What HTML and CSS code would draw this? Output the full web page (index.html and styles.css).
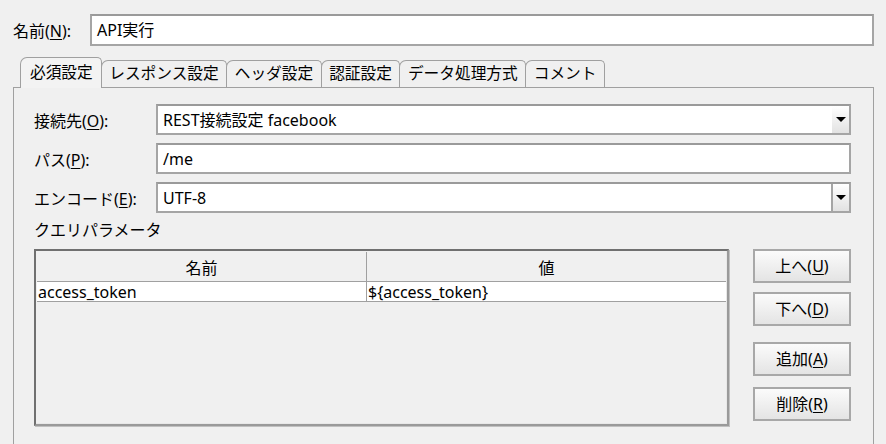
FILE: index.html
```html
<!DOCTYPE html>
<html lang="ja">
<head>
<meta charset="utf-8">
<link rel="stylesheet" href="styles.css">
</head>
<body>
<div class="window">
  <div class="top-row">
    <span class="top-label">名前(<u>N</u>):</span>
    <div class="textbox top-input">API実行</div>
  </div>
  <div class="tabs">
    <div class="tab selected">必須設定</div>
    <div class="tab">レスポンス設定</div>
    <div class="tab">ヘッダ設定</div>
    <div class="tab">認証設定</div>
    <div class="tab">データ処理方式</div>
    <div class="tab">コメント</div>
  </div>
  <div class="panel">
    <div class="form-row">
      <span class="form-label">接続先(<u>O</u>):</span>
      <div class="textbox combo">
        <span class="combo-text">REST接続設定 facebook</span>
        <span class="combo-btn"><span class="arrow"></span></span>
      </div>
    </div>
    <div class="form-row">
      <span class="form-label">パス(<u>P</u>):</span>
      <div class="textbox field">/me</div>
    </div>
    <div class="form-row">
      <span class="form-label">エンコード(<u>E</u>):</span>
      <div class="textbox combo">
        <span class="combo-text">UTF-8</span>
        <span class="combo-btn sep"><span class="arrow"></span></span>
      </div>
    </div>
    <div class="section-label">クエリパラメータ</div>
    <div class="params">
      <div class="table">
        <div class="thead">
          <div class="th col1">名前</div>
          <div class="th col2">値</div>
        </div>
        <div class="tr">
          <div class="td col1">access_token</div>
          <div class="td col2">${access_token}</div>
        </div>
      </div>
      <div class="buttons">
        <button class="btn b-up">上へ(<u>U</u>)</button>
        <button class="btn b-down">下へ(<u>D</u>)</button>
        <button class="btn b-add">追加(<u>A</u>)</button>
        <button class="btn b-del">削除(<u>R</u>)</button>
      </div>
    </div>
  </div>
</div>
</body>
</html>
```
FILE: styles.css
```css
* { box-sizing: border-box; }
html, body {
  margin: 0;
  padding: 0;
  background: #f0f0f0;
}
body {
  width: 886px;
  height: 444px;
  overflow: hidden;
  font-family: "Noto Sans", "Noto Sans CJK JP", sans-serif;
  font-size: 16px;
  color: #000;
}
u { text-decoration: underline; text-underline-offset: 2px; }

.window { padding: 14px 12px 0 13px; }

.top-row {
  display: flex;
  align-items: center;
  height: 32px;
}
.top-label { width: 77px; }
.textbox {
  background: #fff;
  border: 2px solid #a5a5a5;
  border-top-color: #9a9a9a;
  height: 32px;
  display: flex;
  align-items: center;
  padding-left: 5px;
  line-height: 1;
}
.top-input { flex: 1; }

.tabs {
  display: flex;
  align-items: flex-end;
  margin-top: 11px;
  padding-left: 7px;
  height: 30px;
}
.tab {
  height: 27px;
  padding: 0 7.5px;
  border: 1px solid #a0a0a0;
  border-bottom: none;
  border-radius: 7px 5px 0 0;
  display: flex;
  align-items: center;
  background: #f0f0f0;
  line-height: 1;
  margin-right: -1px;
  font-size: 15.7px;
}
.tab.selected {
  background: #f3f3f3;
  position: relative;
  z-index: 1;
  margin-bottom: -1px;
  height: 31px;
  padding: 0 8px 0 9px;
}

.panel {
  border: 1px solid #a0a0a0;
  border-bottom: none;
  padding: 16px 22px 0 20px;
  height: 360px;
}
.form-row {
  display: flex;
  align-items: center;
  height: 31px;
  margin-bottom: 8px;
}
.form-label { width: 122px; }
.field, .combo { flex: 1; height: 31px; }
.combo { padding-right: 0; }
.combo-text { flex: 1; }
.combo-btn {
  width: 17px;
  height: 100%;
  display: flex;
  align-items: center;
  justify-content: center;
  background: linear-gradient(#ffffff, #e2e2e2);
}
.combo-btn.sep { border-left: 2px solid #a5a5a5; width: 18px; }
.arrow {
  width: 0;
  height: 0;
  border-left: 5px solid transparent;
  border-right: 5px solid transparent;
  border-top: 5px solid #000;
}

.section-label {
  height: 23px;
  line-height: 20px;
  margin-top: -1px;
}

.params {
  display: flex;
  gap: 24px;
  margin-top: 6px;
}
.table {
  flex: 1;
  height: 177px;
  border: 2px solid #9a9a9a;
  border-top-color: #707070;
  border-left-color: #707070;
  box-shadow: 1px 1px 0 #c0c0c0, inset -1px -1px 0 #e8e8e8;
  background: #f0f0f0;
  padding: 1px;
}
.thead, .tr { display: flex; }
.thead {
  height: 30px;
  border-bottom: 1px solid #a0a0a0;
}
.th {
  display: flex;
  align-items: center;
  justify-content: center;
  background: #f0f0f0;
}
.col1 { width: 330px; border-right: 1px solid #a0a0a0; }
.col2 { flex: 1; }
.tr {
  height: 20px;
  background: #fff;
  border-bottom: 1px solid #a0a0a0;
}
.td {
  display: flex;
  align-items: center;
  padding-left: 1px;
  line-height: 1;
}

.buttons {
  width: 98px;
  display: flex;
  flex-direction: column;
}
.btn {
  height: 34px;
  font: inherit;
  color: #000;
  border: 2px solid #a8a8a8;
  background: linear-gradient(#fbfbfb, #e4e4e4);
  padding: 0;
  line-height: 1;
}
.b-up { margin-top: 0; }
.b-down { margin-top: 9px; }
.b-add { margin-top: 16px; }
.b-del { margin-top: 11px; }
```
